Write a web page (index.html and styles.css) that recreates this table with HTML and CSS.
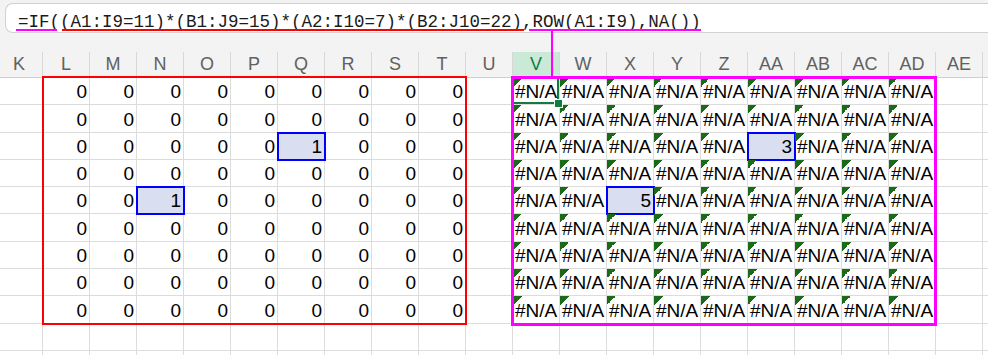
FILE: index.html
```html
<!DOCTYPE html>
<html lang="en">
<head>
<meta charset="utf-8">
<title>Sheet</title>
<link rel="stylesheet" href="styles.css">
</head>
<body>
<div class="top">
  <div class="fbar"><span class="u m1">=IF(</span><span class="u r">(A1:I9=11)*(B1:J9=15)*(A2:I10=7)*(B2:J10=22)</span>,<span class="u m2">ROW(A1:I9),NA())</span></div>
</div>
<div class="link"></div>
<div class="sheet">
  <div class="cells">
    <div class="h">K</div><div class="h">L</div><div class="h">M</div><div class="h">N</div><div class="h">O</div><div class="h">P</div><div class="h">Q</div><div class="h">R</div><div class="h">S</div><div class="h">T</div><div class="h">U</div><div class="h sel">V</div><div class="h">W</div><div class="h">X</div><div class="h">Y</div><div class="h">Z</div><div class="h">AA</div><div class="h">AB</div><div class="h">AC</div><div class="h">AD</div><div class="h">AE</div><div class="h"></div>

    <div class="c"></div><div class="c n">0</div><div class="c n">0</div><div class="c n">0</div><div class="c n">0</div><div class="c n">0</div><div class="c n">0</div><div class="c n">0</div><div class="c n">0</div><div class="c n">0</div><div class="c"></div><div class="c e act">#N/A</div><div class="c e">#N/A</div><div class="c e">#N/A</div><div class="c e">#N/A</div><div class="c e">#N/A</div><div class="c e">#N/A</div><div class="c e">#N/A</div><div class="c e">#N/A</div><div class="c e">#N/A</div><div class="c"></div><div class="c"></div>

    <div class="c"></div><div class="c n">0</div><div class="c n">0</div><div class="c n">0</div><div class="c n">0</div><div class="c n">0</div><div class="c n">0</div><div class="c n">0</div><div class="c n">0</div><div class="c n">0</div><div class="c"></div><div class="c e">#N/A</div><div class="c e">#N/A</div><div class="c e">#N/A</div><div class="c e">#N/A</div><div class="c e">#N/A</div><div class="c e">#N/A</div><div class="c e">#N/A</div><div class="c e">#N/A</div><div class="c e">#N/A</div><div class="c"></div><div class="c"></div>

    <div class="c"></div><div class="c n">0</div><div class="c n">0</div><div class="c n">0</div><div class="c n">0</div><div class="c n">0</div><div class="c n hl">1</div><div class="c n">0</div><div class="c n">0</div><div class="c n">0</div><div class="c"></div><div class="c e">#N/A</div><div class="c e">#N/A</div><div class="c e">#N/A</div><div class="c e">#N/A</div><div class="c e">#N/A</div><div class="c n hl">3</div><div class="c e">#N/A</div><div class="c e">#N/A</div><div class="c e">#N/A</div><div class="c"></div><div class="c"></div>

    <div class="c"></div><div class="c n">0</div><div class="c n">0</div><div class="c n">0</div><div class="c n">0</div><div class="c n">0</div><div class="c n">0</div><div class="c n">0</div><div class="c n">0</div><div class="c n">0</div><div class="c"></div><div class="c e">#N/A</div><div class="c e">#N/A</div><div class="c e">#N/A</div><div class="c e">#N/A</div><div class="c e">#N/A</div><div class="c e">#N/A</div><div class="c e">#N/A</div><div class="c e">#N/A</div><div class="c e">#N/A</div><div class="c"></div><div class="c"></div>

    <div class="c"></div><div class="c n">0</div><div class="c n">0</div><div class="c n hl">1</div><div class="c n">0</div><div class="c n">0</div><div class="c n">0</div><div class="c n">0</div><div class="c n">0</div><div class="c n">0</div><div class="c"></div><div class="c e">#N/A</div><div class="c e">#N/A</div><div class="c n hl">5</div><div class="c e">#N/A</div><div class="c e">#N/A</div><div class="c e">#N/A</div><div class="c e">#N/A</div><div class="c e">#N/A</div><div class="c e">#N/A</div><div class="c"></div><div class="c"></div>

    <div class="c"></div><div class="c n">0</div><div class="c n">0</div><div class="c n">0</div><div class="c n">0</div><div class="c n">0</div><div class="c n">0</div><div class="c n">0</div><div class="c n">0</div><div class="c n">0</div><div class="c"></div><div class="c e">#N/A</div><div class="c e">#N/A</div><div class="c e">#N/A</div><div class="c e">#N/A</div><div class="c e">#N/A</div><div class="c e">#N/A</div><div class="c e">#N/A</div><div class="c e">#N/A</div><div class="c e">#N/A</div><div class="c"></div><div class="c"></div>

    <div class="c"></div><div class="c n">0</div><div class="c n">0</div><div class="c n">0</div><div class="c n">0</div><div class="c n">0</div><div class="c n">0</div><div class="c n">0</div><div class="c n">0</div><div class="c n">0</div><div class="c"></div><div class="c e">#N/A</div><div class="c e">#N/A</div><div class="c e">#N/A</div><div class="c e">#N/A</div><div class="c e">#N/A</div><div class="c e">#N/A</div><div class="c e">#N/A</div><div class="c e">#N/A</div><div class="c e">#N/A</div><div class="c"></div><div class="c"></div>

    <div class="c"></div><div class="c n">0</div><div class="c n">0</div><div class="c n">0</div><div class="c n">0</div><div class="c n">0</div><div class="c n">0</div><div class="c n">0</div><div class="c n">0</div><div class="c n">0</div><div class="c"></div><div class="c e">#N/A</div><div class="c e">#N/A</div><div class="c e">#N/A</div><div class="c e">#N/A</div><div class="c e">#N/A</div><div class="c e">#N/A</div><div class="c e">#N/A</div><div class="c e">#N/A</div><div class="c e">#N/A</div><div class="c"></div><div class="c"></div>

    <div class="c"></div><div class="c n">0</div><div class="c n">0</div><div class="c n">0</div><div class="c n">0</div><div class="c n">0</div><div class="c n">0</div><div class="c n">0</div><div class="c n">0</div><div class="c n">0</div><div class="c"></div><div class="c e">#N/A</div><div class="c e">#N/A</div><div class="c e">#N/A</div><div class="c e">#N/A</div><div class="c e">#N/A</div><div class="c e">#N/A</div><div class="c e">#N/A</div><div class="c e">#N/A</div><div class="c e">#N/A</div><div class="c"></div><div class="c"></div>

    <div class="c"></div><div class="c"></div><div class="c"></div><div class="c"></div><div class="c"></div><div class="c"></div><div class="c"></div><div class="c"></div><div class="c"></div><div class="c"></div><div class="c"></div><div class="c"></div><div class="c"></div><div class="c"></div><div class="c"></div><div class="c"></div><div class="c"></div><div class="c"></div><div class="c"></div><div class="c"></div><div class="c"></div><div class="c"></div>

    <div class="c"></div><div class="c"></div><div class="c"></div><div class="c"></div><div class="c"></div><div class="c"></div><div class="c"></div><div class="c"></div><div class="c"></div><div class="c"></div><div class="c"></div><div class="c"></div><div class="c"></div><div class="c"></div><div class="c"></div><div class="c"></div><div class="c"></div><div class="c"></div><div class="c"></div><div class="c"></div><div class="c"></div><div class="c"></div>
  </div>
  <div class="marks">
    <div class="box-red"></div>
    <div class="box-mag"></div>
  </div>
</div>
</body>
</html>
```

FILE: styles.css
```css
* { box-sizing: border-box; }
html, body { margin: 0; padding: 0; }
body {
  width: 988px;
  height: 355px;
  overflow: hidden;
  position: relative;
  background: #f3f3f3;
  font-family: "Liberation Sans", Arial, sans-serif;
  color: #000;
}

.top {
  height: 52px;
  padding: 3px 0 0 5px;
}
.fbar {
  height: 30px;
  width: 983px;
  background: #fff;
  border: 1px solid #d1d1d1;
  border-right: 0;
  border-radius: 8px 0 0 8px;
  padding: 8px 0 0 12px;
  font: 17.5px/20px "Liberation Mono", "DejaVu Sans Mono", monospace;
  color: #1a1a1a;
  white-space: nowrap;
}
.u { position: relative; }
.u::after {
  content: "";
  position: absolute;
  bottom: 1px;
  height: 2px;
}
.m1::after { left: -2px; right: 3px; background: #ff00ff; }
.r::after { left: 2px; right: -2px; background: #ff0000; }
.m2::after { left: -4px; right: 0; background: #ff00ff; }

.link {
  position: absolute;
  left: 551px;
  top: 30px;
  width: 2px;
  height: 47px;
  background: #ff00ff;
  z-index: 5;
}

.sheet {
  display: grid;
  margin-left: -4px;
  width: 992px;
  height: 303px;
  overflow: hidden;
}
.cells, .marks {
  grid-area: 1 / 1;
  display: grid;
  grid-template-columns: repeat(22, 47px);
  grid-template-rows: 26px repeat(11, 27.3px);
}
.cells { background: #fff; }
.marks { z-index: 4; pointer-events: none; }

.h {
  background: #f3f3f3;
  border-right: 1px solid #d8d8d8;
  border-bottom: 1px solid #cfcfcf;
  color: #616161;
  font-size: 18px;
  display: flex;
  align-items: center;
  justify-content: center;
}
.h.sel {
  background: #cbe9d7;
  color: #107c41;
}

.c {
  position: relative;
  border-right: 1px solid #dcdcdc;
  border-bottom: 1px solid #dcdcdc;
  font-size: 19px;
  display: flex;
  align-items: flex-end;
  padding-bottom: 1px;
  white-space: nowrap;
}
.n { justify-content: flex-end; padding-right: 2px; }
.e { justify-content: center; }
.e::before {
  content: "";
  position: absolute;
  top: 0;
  left: 0;
  width: 9px;
  height: 9px;
  background: linear-gradient(135deg, #1a6a1a 50%, transparent 50%);
  z-index: 1;
}
.hl {
  background: #d9def0;
  outline: 2px solid #0000ff;
  outline-offset: -1px;
  z-index: 1;
}
.act {
  box-shadow: inset -2px -2px 0 #107c41;
  z-index: 2;
}
.act::after {
  content: "";
  position: absolute;
  right: -4px;
  bottom: -4px;
  width: 7px;
  height: 7px;
  background: #107c41;
  border: 1px solid #fff;
}

.box-red {
  grid-column: 2 / 11;
  grid-row: 2 / 11;
  border: 2px solid #ff0000;
  margin: -2px -1px -1px -1px;
}
.box-mag {
  grid-column: 12 / 21;
  grid-row: 2 / 11;
  border: 3px solid #ff00ff;
  margin: -2px -1px -2px -2px;
}
```
